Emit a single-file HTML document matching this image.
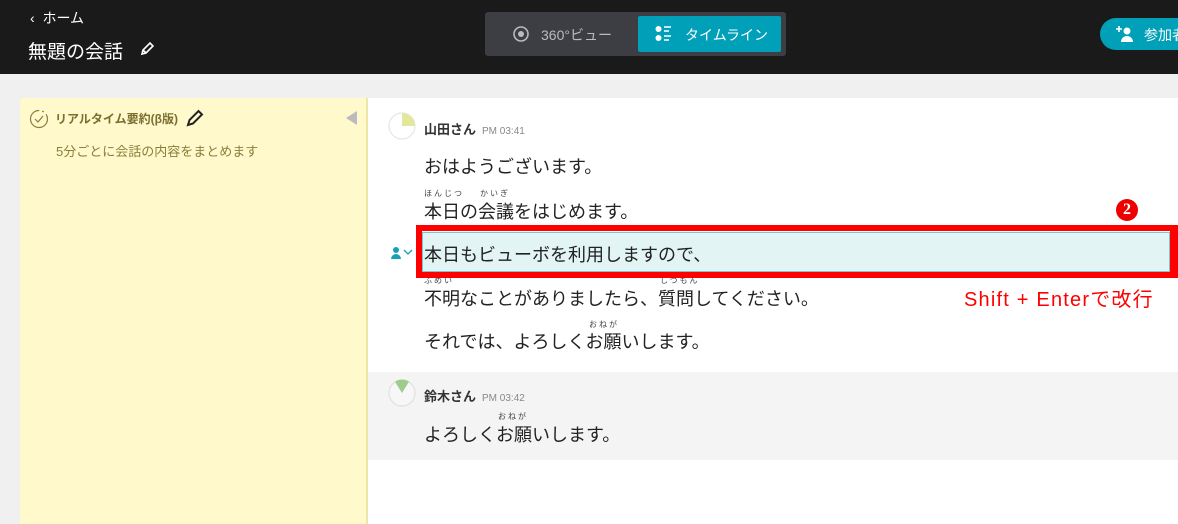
<!DOCTYPE html>
<html><head><meta charset="utf-8"><style>
*{margin:0;padding:0;box-sizing:border-box}
body{width:1178px;height:524px;overflow:hidden;background:#f0f0f0;font-family:"Liberation Sans","Noto Sans CJK JP",sans-serif;position:relative}
.hdr{position:absolute;left:0;top:0;width:1178px;height:74px;background:#1a1a1a;color:#fff}
.abs{position:absolute;white-space:nowrap}
.msg{position:absolute;left:424px;font-size:18px;color:#222;white-space:nowrap}
.rt{position:absolute;font-size:8px;color:#444;white-space:nowrap;letter-spacing:2px}
.name{position:absolute;left:424px;font-size:13px;font-weight:bold;color:#333;white-space:nowrap}
.time{font-size:10px;color:#888;font-weight:normal;margin-left:6px}
</style></head><body>
<div class="hdr">
 <div class="abs" style="left:30px;top:8px;font-size:14px">‹&nbsp;&nbsp;ホーム</div>
 <div class="abs" style="left:28px;top:37px;font-size:19px">無題の会話</div>
 <svg class="abs" style="left:139px;top:41px" width="16" height="16" viewBox="0 0 16 16"><path d="M3 13l1-4 7-7 3 3-7 7z M4 9l3 3" fill="none" stroke="#fff" stroke-width="1.6"/></svg>
 <div class="abs" style="left:485px;top:12px;width:301px;height:44px;background:#3d3d44;border-radius:3px"></div>
 <svg class="abs" style="left:512px;top:25px" width="18" height="18" viewBox="0 0 18 18"><circle cx="9" cy="9" r="7" fill="none" stroke="#bbb" stroke-width="1.6"/><circle cx="9" cy="9" r="3" fill="#bbb"/></svg>
 <div class="abs" style="left:541px;top:25px;font-size:14px;color:#bbb">360°ビュー</div>
 <div class="abs" style="left:638px;top:16px;width:143px;height:36px;background:#00a0b8;border-radius:2px"></div>
 <svg class="abs" style="left:655px;top:25px" width="20" height="18" viewBox="0 0 20 18"><circle cx="3.5" cy="4" r="3" fill="#fff"/><circle cx="3.5" cy="13" r="3" fill="#fff"/><path d="M9 2h7M9 6h5M9 11h7M9 15h5" stroke="#fff" stroke-width="1.5"/></svg>
 <div class="abs" style="left:685px;top:25px;font-size:14px;color:#fff">タイムライン</div>
 <div class="abs" style="left:1100px;top:18px;width:100px;height:32px;background:#00a0b8;border-radius:16px"></div>
 <svg class="abs" style="left:1115px;top:25px" width="20" height="18" viewBox="0 0 20 18"><path d="M4 1v6M1 4h6" stroke="#fff" stroke-width="1.6"/><circle cx="12" cy="6" r="3.5" fill="#fff"/><path d="M6 17a6 6 0 0 1 12 0z" fill="#fff"/></svg>
 <div class="abs" style="left:1144px;top:25px;font-size:14px;color:#fff">参加者</div>
</div>
<div class="abs" style="left:20px;top:98px;width:348px;height:426px;background:#fff9cc;border-right:2px solid #efe6a6;border-radius:4px 0 0 0"></div>
<svg class="abs" style="left:28px;top:107px" width="22" height="22" viewBox="0 0 22 22"><circle cx="11" cy="12" r="8.5" fill="none" stroke="#8a7e3a" stroke-width="1.2" stroke-dasharray="40 3 2 3"/><path d="M7 12l3 3 5-6" fill="none" stroke="#8a7e3a" stroke-width="1.2"/></svg>
<div class="abs" style="left:55px;top:110px;font-size:12px;font-weight:bold;color:#7a6f2e">リアルタイム要約(β版)</div>
<svg class="abs" style="left:185px;top:108px" width="20" height="20" viewBox="0 0 20 20"><path d="M3 17l1.5-5 9-9 3.5 3.5-9 9z" fill="none" stroke="#222" stroke-width="2"/></svg>
<div class="abs" style="left:346px;top:111px;width:0;height:0;border-top:7px solid transparent;border-bottom:7px solid transparent;border-right:11px solid #bbb"></div>
<div class="abs" style="left:56px;top:141px;font-size:13px;color:#8a7e3a">5分ごとに会話の内容をまとめます</div>

<div class="abs" style="left:368px;top:98px;width:810px;height:274px;background:#fff"></div>
<div class="abs" style="left:368px;top:372px;width:810px;height:88px;background:#f4f4f4"></div>
<div class="abs" style="left:368px;top:460px;width:810px;height:64px;background:#fff"></div>

<svg class="abs" style="left:388px;top:112px" width="28" height="28" viewBox="0 0 28 28"><circle cx="14" cy="14" r="13" fill="#fff" stroke="#e6e6e6" stroke-width="1.2"/><path d="M14 14L14 1A13 13 0 0 1 27 14z" fill="#e3e79a"/></svg>
<div class="name" style="top:119px">山田さん<span class="time">PM 03:41</span></div>
<div class="msg" style="top:153px">おはようございます。</div>
<div class="rt" style="left:424px;top:188px">ほんじつ</div><div class="rt" style="left:480px;top:188px">かいぎ</div>
<div class="msg" style="top:198px">本日の会議をはじめます。</div>

<div class="abs" style="left:416px;top:225px;width:762px;height:53px;border:6px solid #f00;border-right:none"></div>
<div class="abs" style="left:422px;top:232px;width:748px;height:40px;background:#e2f4f4;border:1px solid #7fc3cc"></div>
<div class="abs" style="left:1170px;top:225px;width:8px;height:53px;background:#f00"></div>
<div class="msg" style="top:241px">本日もビューボを利用しますので、</div>
<svg class="abs" style="left:390px;top:246px" width="24" height="14" viewBox="0 0 24 14"><circle cx="6" cy="4" r="3" fill="#1aa0b4"/><path d="M1 13a5 5 0 0 1 10 0z" fill="#1aa0b4"/><path d="M14 4l4 4 4-4" fill="none" stroke="#1aa0b4" stroke-width="1.3"/></svg>
<div class="abs" style="left:1116px;top:199px;width:22px;height:22px;border-radius:50%;background:#e00;color:#fff;font-weight:bold;font-size:16px;text-align:center;line-height:22px;font-family:'Liberation Serif',serif">2</div>
<div class="rt" style="left:424px;top:275px">ふめい</div><div class="rt" style="left:660px;top:275px">しつもん</div>
<div class="msg" style="top:285px">不明なことがありましたら、質問してください。</div>
<div class="abs" style="left:964px;top:283px;font-size:20px;letter-spacing:1.2px;color:#f00">Shift + Enterで改行</div>
<div class="rt" style="left:589px;top:319px">おねが</div>
<div class="msg" style="top:328px">それでは、よろしくお願いします。</div>

<svg class="abs" style="left:388px;top:379px" width="28" height="28" viewBox="0 0 28 28"><circle cx="14" cy="14" r="13" fill="#f7f7f7" stroke="#e0e0e0" stroke-width="1.2"/><path d="M14 14L7 2.7A13 13 0 0 1 21 2.7z" fill="#9fcc8c"/></svg>
<div class="name" style="top:386px">鈴木さん<span class="time">PM 03:42</span></div>
<div class="rt" style="left:498px;top:411px">おねが</div>
<div class="msg" style="top:421px">よろしくお願いします。</div>
</body></html>
